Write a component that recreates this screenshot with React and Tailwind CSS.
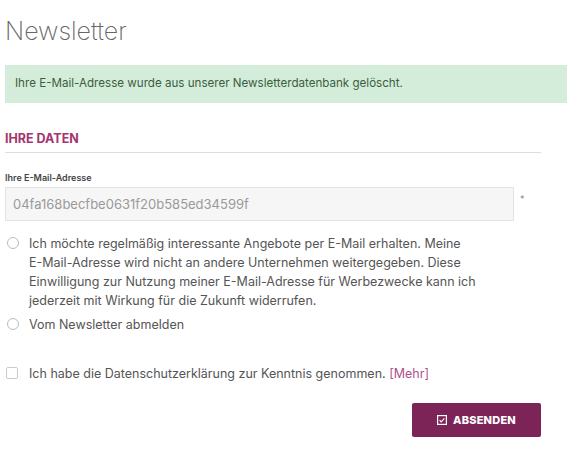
import React, { useState } from "react";

const font = { fontFamily: "Inter, 'Open Sans', sans-serif" };

export default function App() {
  const [choice, setChoice] = useState(null);
  const [agreed, setAgreed] = useState(false);

  return (
    <div className="min-h-screen bg-white pl-[5px] pt-[14px] text-[#555]" style={font}>
      <h1 className="text-[25px] font-extralight leading-[34px] text-[#666]">Newsletter</h1>

      <div className="mt-[17px] flex h-[38px] items-center bg-[#d4ecda] pl-[10px] text-[11.6px] text-[#3b5e3e]">
        Ihre E-Mail-Adresse wurde aus unserer Newsletterdatenbank gelöscht.
      </div>

      <div className="w-[536px]">
        <h2 className="mt-[27px] text-[12.5px] font-bold leading-[18px] text-[#a3346f]">IHRE DATEN</h2>
        <div className="mt-[4px] border-t border-[#ddd]" />

        <label className="mt-[19px] block text-[9px] font-semibold leading-[12px] text-[#444]">Ihre E-Mail-Adresse</label>
        <div className="mt-[3px] flex items-start">
          <input
            readOnly
            value="04fa168becfbe0631f20b585ed34599f"
            className="h-[34px] w-[509px] border border-[#e3e3e3] bg-[#f6f6f6] px-[7px] text-[13px] text-[#9a9a9a] outline-none"
          />
          <span className="ml-[6px] mt-[5px] text-[9px] text-[#888]">*</span>
        </div>

        <div className="mt-[13px] flex flex-col gap-[5px] text-[12.5px] leading-[19px] text-[#555]">
          <label className="flex items-start">
            <span
              onClick={() => setChoice(1)}
              className="mt-[3px] ml-[2px] h-[12px] w-[12px] shrink-0 rounded-full border border-[#bbb]"
            />
            <span className="ml-[10px] w-[490px]">
              Ich möchte regelmäßig interessante Angebote per E-Mail erhalten. Meine
              <br />
              E-Mail-Adresse wird nicht an andere Unternehmen weitergegeben. Diese
              <br />
              Einwilligung zur Nutzung meiner E-Mail-Adresse für Werbezwecke kann ich
              <br />
              jederzeit mit Wirkung für die Zukunft widerrufen.
            </span>
          </label>
          <label className="flex items-start">
            <span
              onClick={() => setChoice(2)}
              className="mt-[3px] ml-[2px] h-[12px] w-[12px] shrink-0 rounded-full border border-[#bbb]"
            />
            <span className="ml-[10px]">Vom Newsletter abmelden</span>
          </label>
        </div>

        <label className="mt-[30px] flex items-start text-[12.5px] leading-[19px] text-[#555]">
          <span
            onClick={() => setAgreed(!agreed)}
            className="mt-[3px] ml-[1px] h-[12px] w-[12px] shrink-0 rounded-[2px] border border-[#ccc]"
          />
          <span className="ml-[11px]">
            Ich habe die Datenschutzerklärung zur Kenntnis genommen. <a className="text-[#b0508a]">[Mehr]</a>
          </span>
        </label>

        <div className="mt-[20px] flex justify-end">
          <button className="flex h-[34px] w-[129px] items-center justify-center gap-[6px] rounded-[2px] bg-[#7c2357] text-[11px] font-extrabold tracking-[0.2px] text-white">
            <svg width="10" height="10" viewBox="0 0 10 10" fill="none" stroke="white" strokeWidth="1.2">
              <rect x="0.6" y="0.6" width="8.8" height="8.8" />
              <path d="M2.6 5.2l1.6 1.6 3.2-3.4" />
            </svg>
            ABSENDEN
          </button>
        </div>
      </div>
    </div>
  );
}
